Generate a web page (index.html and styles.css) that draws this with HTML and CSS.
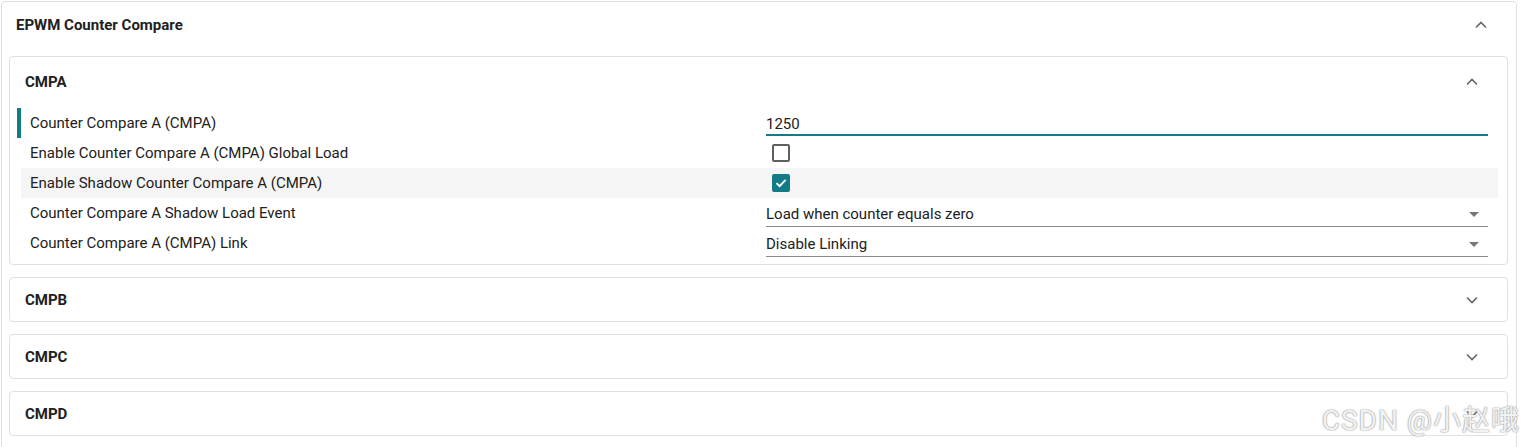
FILE: index.html
```html
<!DOCTYPE html>
<html lang="en">
  <head>
    <meta charset="UTF-8" />
    <meta name="viewport" content="width=device-width, initial-scale=1.0" />
    <title>EPWM Counter Compare</title>
    <link rel="stylesheet" href="styles.css">
  </head>
  <body>
    <div class="panel">
      <div class="panel-header">
        <span class="panel-title">EPWM Counter Compare</span>
        <svg class="chevron" width="14" height="14" viewBox="0 0 14 14"><path d="M2 9.5 L7 4.5 L12 9.5" /></svg>
      </div>

      <div class="group open">
        <div class="group-header">
          <span class="group-title">CMPA</span>
          <svg class="chevron" width="14" height="14" viewBox="0 0 14 14"><path d="M2 9.5 L7 4.5 L12 9.5" /></svg>
        </div>
        <div class="group-body">
          <div class="row active">
            <div class="label">Counter Compare A (CMPA)</div>
            <div class="value"><input class="text-input" type="text" value="1250"></div>
          </div>
          <div class="row">
            <div class="label">Enable Counter Compare A (CMPA) Global Load</div>
            <div class="value"><span class="checkbox"></span></div>
          </div>
          <div class="row hover">
            <div class="label">Enable Shadow Counter Compare A (CMPA)</div>
            <div class="value">
              <span class="checkbox checked">
                <svg width="14" height="14" viewBox="0 0 14 14"><path d="M2.5 7.2 L5.6 10.2 L11.6 3.8" /></svg>
              </span>
            </div>
          </div>
          <div class="row">
            <div class="label">Counter Compare A Shadow Load Event</div>
            <div class="value"><div class="select">Load when counter equals zero<span class="caret"></span></div></div>
          </div>
          <div class="row">
            <div class="label">Counter Compare A (CMPA) Link</div>
            <div class="value"><div class="select wide">Disable Linking<span class="caret"></span></div></div>
          </div>
        </div>
      </div>

      <div class="group">
        <div class="group-header">
          <span class="group-title">CMPB</span>
          <svg class="chevron" width="14" height="14" viewBox="0 0 14 14"><path d="M2 4.5 L7 9.5 L12 4.5" /></svg>
        </div>
      </div>
      <div class="group">
        <div class="group-header">
          <span class="group-title">CMPC</span>
          <svg class="chevron" width="14" height="14" viewBox="0 0 14 14"><path d="M2 4.5 L7 9.5 L12 4.5" /></svg>
        </div>
      </div>
      <div class="group">
        <div class="group-header">
          <span class="group-title">CMPD</span>
          <svg class="chevron" width="14" height="14" viewBox="0 0 14 14"><path d="M2 4.5 L7 9.5 L12 4.5" /></svg>
        </div>
      </div>
    </div>

    <div class="watermark">CSDN @小赵哦</div>
  </body>
</html>
```

FILE: styles.css
```css
body {
  margin: 0;
  font-family: Roboto, "Liberation Sans", "Noto Sans CJK SC", sans-serif;
  font-size: 15px;
  color: #212121;
  background: #fff;
  overflow: hidden;
}

.panel {
  margin: 1px 4px 0 1px;
  border: 1px solid #e0e0e0;
  border-radius: 4px;
  padding: 0 8px 20px 7px;
}

.panel-header {
  display: flex;
  align-items: center;
  justify-content: space-between;
  height: 46px;
  padding: 0 20px 0 7px;
  margin-bottom: 8px;
}

.panel-title,
.group-title {
  font-weight: 700;
  font-size: 15px;
}

.chevron path {
  fill: none;
  stroke: #666;
  stroke-width: 1.6;
}

.group {
  border: 1px solid #e0e0e0;
  border-radius: 4px;
  margin-bottom: 12px;
}

.group-header {
  display: flex;
  align-items: center;
  justify-content: space-between;
  height: 43px;
  padding: 0 28px 0 15px;
}

.group.open .group-header {
  height: 50px;
}

.group-body {
  padding: 1px 9px 6px 7px;
}

.row {
  display: grid;
  grid-template-columns: 745px 1fr;
  align-items: center;
  height: 30px;
  border-left: 4px solid transparent;
  background-clip: padding-box;
}

.row.active {
  border-left-color: #127b85;
}

.row.hover {
  background-color: #f5f5f5;
}

.label {
  padding-left: 9px;
}

.value {
  display: flex;
  align-items: center;
  padding-right: 10px;
  height: 100%;
}

.text-input {
  width: 100%;
  box-sizing: border-box;
  border: none;
  border-bottom: 2px solid #127b85;
  outline: none;
  padding: 3px 0 1px;
  margin-top: 1px;
  font: inherit;
  color: #212121;
  background: transparent;
}

.checkbox {
  display: flex;
  align-items: center;
  justify-content: center;
  width: 14px;
  height: 14px;
  margin-left: 6px;
  border: 2px solid #5f5f5f;
  border-radius: 2px;
}

.checkbox.checked {
  background: #127b85;
  border-color: #127b85;
}

.checkbox svg path {
  fill: none;
  stroke: #fff;
  stroke-width: 1.8;
}

.select {
  position: relative;
  width: 100%;
  box-sizing: border-box;
  border-bottom: 1px solid #8a8a8a;
  padding: 3px 0 3px;
  margin-top: 2px;
}

.select.wide {
  margin-right: -2px;
}

.caret {
  position: absolute;
  right: 9px;
  top: 10px;
  border-left: 5px solid transparent;
  border-right: 5px solid transparent;
  border-top: 5px solid #777;
}

.watermark {
  position: absolute;
  right: 1px;
  top: 398px;
  font-size: 28px;
  color: #f2f2f2;
  text-shadow: 0 0 1px #888, 0 0 2px #aaa;
  white-space: nowrap;
  letter-spacing: 1px;
}
```
